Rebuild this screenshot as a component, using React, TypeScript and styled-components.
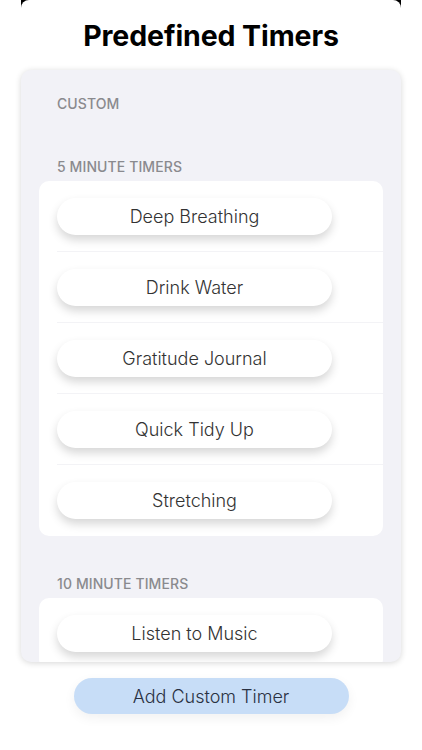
import React from 'react';
import styled, { createGlobalStyle } from 'styled-components';

const GlobalStyle = createGlobalStyle`
  html, body {
    margin: 0;
    padding: 0;
    background: #ffffff;
    font-family: Inter, "Noto Sans", sans-serif;
  }
`;

const Page = styled.div`
  display: flex;
  flex-direction: column;
  align-items: center;
  width: 422px;
  height: 750px;
  overflow: hidden;
`;

const TopCap = styled.div`
  width: 380px;
  height: 8px;
  background: #000000;
  flex-shrink: 0;
`;

const TopCapInner = styled.div`
  height: 100%;
  background: #ffffff;
  border-radius: 9px 9px 0 0;
`;

const Title = styled.h1`
  margin: 11px 0 0;
  font-size: 28.5px;
  line-height: 34px;
  font-weight: 700;
  color: #000000;
  letter-spacing: -0.1px;
`;

const Panel = styled.div`
  margin-top: 17px;
  width: 380px;
  height: 592px;
  flex-shrink: 0;
  background: #f2f2f7;
  border-radius: 10px;
  box-shadow: 0 1px 6px rgba(0, 0, 0, 0.16);
  overflow: hidden;
  padding-top: 25px;
  box-sizing: border-box;
`;

const SectionHeader = styled.div<{ gap?: number }>`
  margin: ${p => p.gap ?? 0}px 0 5px;
  padding-left: 36px;
  font-size: 14px;
  line-height: 18px;
  font-weight: 500;
  color: #8a8a8e;
  letter-spacing: 0.1px;
`;

const Group = styled.div`
  margin: 0 18px;
  background: #ffffff;
  border-radius: 10px;
  overflow: hidden;
`;

const Row = styled.div<{ last?: boolean }>`
  position: relative;
  height: 71px;
  display: flex;
  align-items: center;
  padding-left: 18px;
  box-sizing: border-box;
  &::after {
    content: '';
    display: ${p => (p.last ? 'none' : 'block')};
    position: absolute;
    left: 18px;
    right: 0;
    bottom: 0;
    height: 1px;
    background: #f3f3f6;
  }
`;

const Pill = styled.button`
  position: relative;
  z-index: 1;
  width: 275px;
  height: 37px;
  border: none;
  border-radius: 19px;
  background: #ffffff;
  box-shadow: 0 5px 10px rgba(0, 0, 0, 0.16);
  font-family: Inter, "Noto Sans", sans-serif;
  font-size: 18px;
  font-weight: 300;
  color: #333333;
  padding: 0;
`;

const AddButton = styled.button`
  margin-top: 16px;
  width: 275px;
  height: 36px;
  border: none;
  border-radius: 18px;
  background: #c7ddf7;
  box-shadow: 0 4px 12px rgba(0, 0, 0, 0.06);
  font-family: Inter, "Noto Sans", sans-serif;
  font-size: 18px;
  font-weight: 300;
  color: #2a3142;
  padding: 0;
  flex-shrink: 0;
`;

const fiveMinute = ['Deep Breathing', 'Drink Water', 'Gratitude Journal', 'Quick Tidy Up', 'Stretching'];
const tenMinute = ['Listen to Music'];

export default function App() {
  return (
    <Page>
      <GlobalStyle />
      <TopCap>
        <TopCapInner />
      </TopCap>
      <Title>Predefined Timers</Title>
      <Panel>
        <SectionHeader>CUSTOM</SectionHeader>
        <SectionHeader gap={45}>5 MINUTE TIMERS</SectionHeader>
        <Group>
          {fiveMinute.map((name, i) => (
            <Row key={name} last={i === fiveMinute.length - 1}>
              <Pill>{name}</Pill>
            </Row>
          ))}
        </Group>
        <SectionHeader gap={39}>10 MINUTE TIMERS</SectionHeader>
        <Group>
          {tenMinute.map(name => (
            <Row key={name}>
              <Pill>{name}</Pill>
            </Row>
          ))}
        </Group>
      </Panel>
      <AddButton>Add Custom Timer</AddButton>
    </Page>
  );
}
